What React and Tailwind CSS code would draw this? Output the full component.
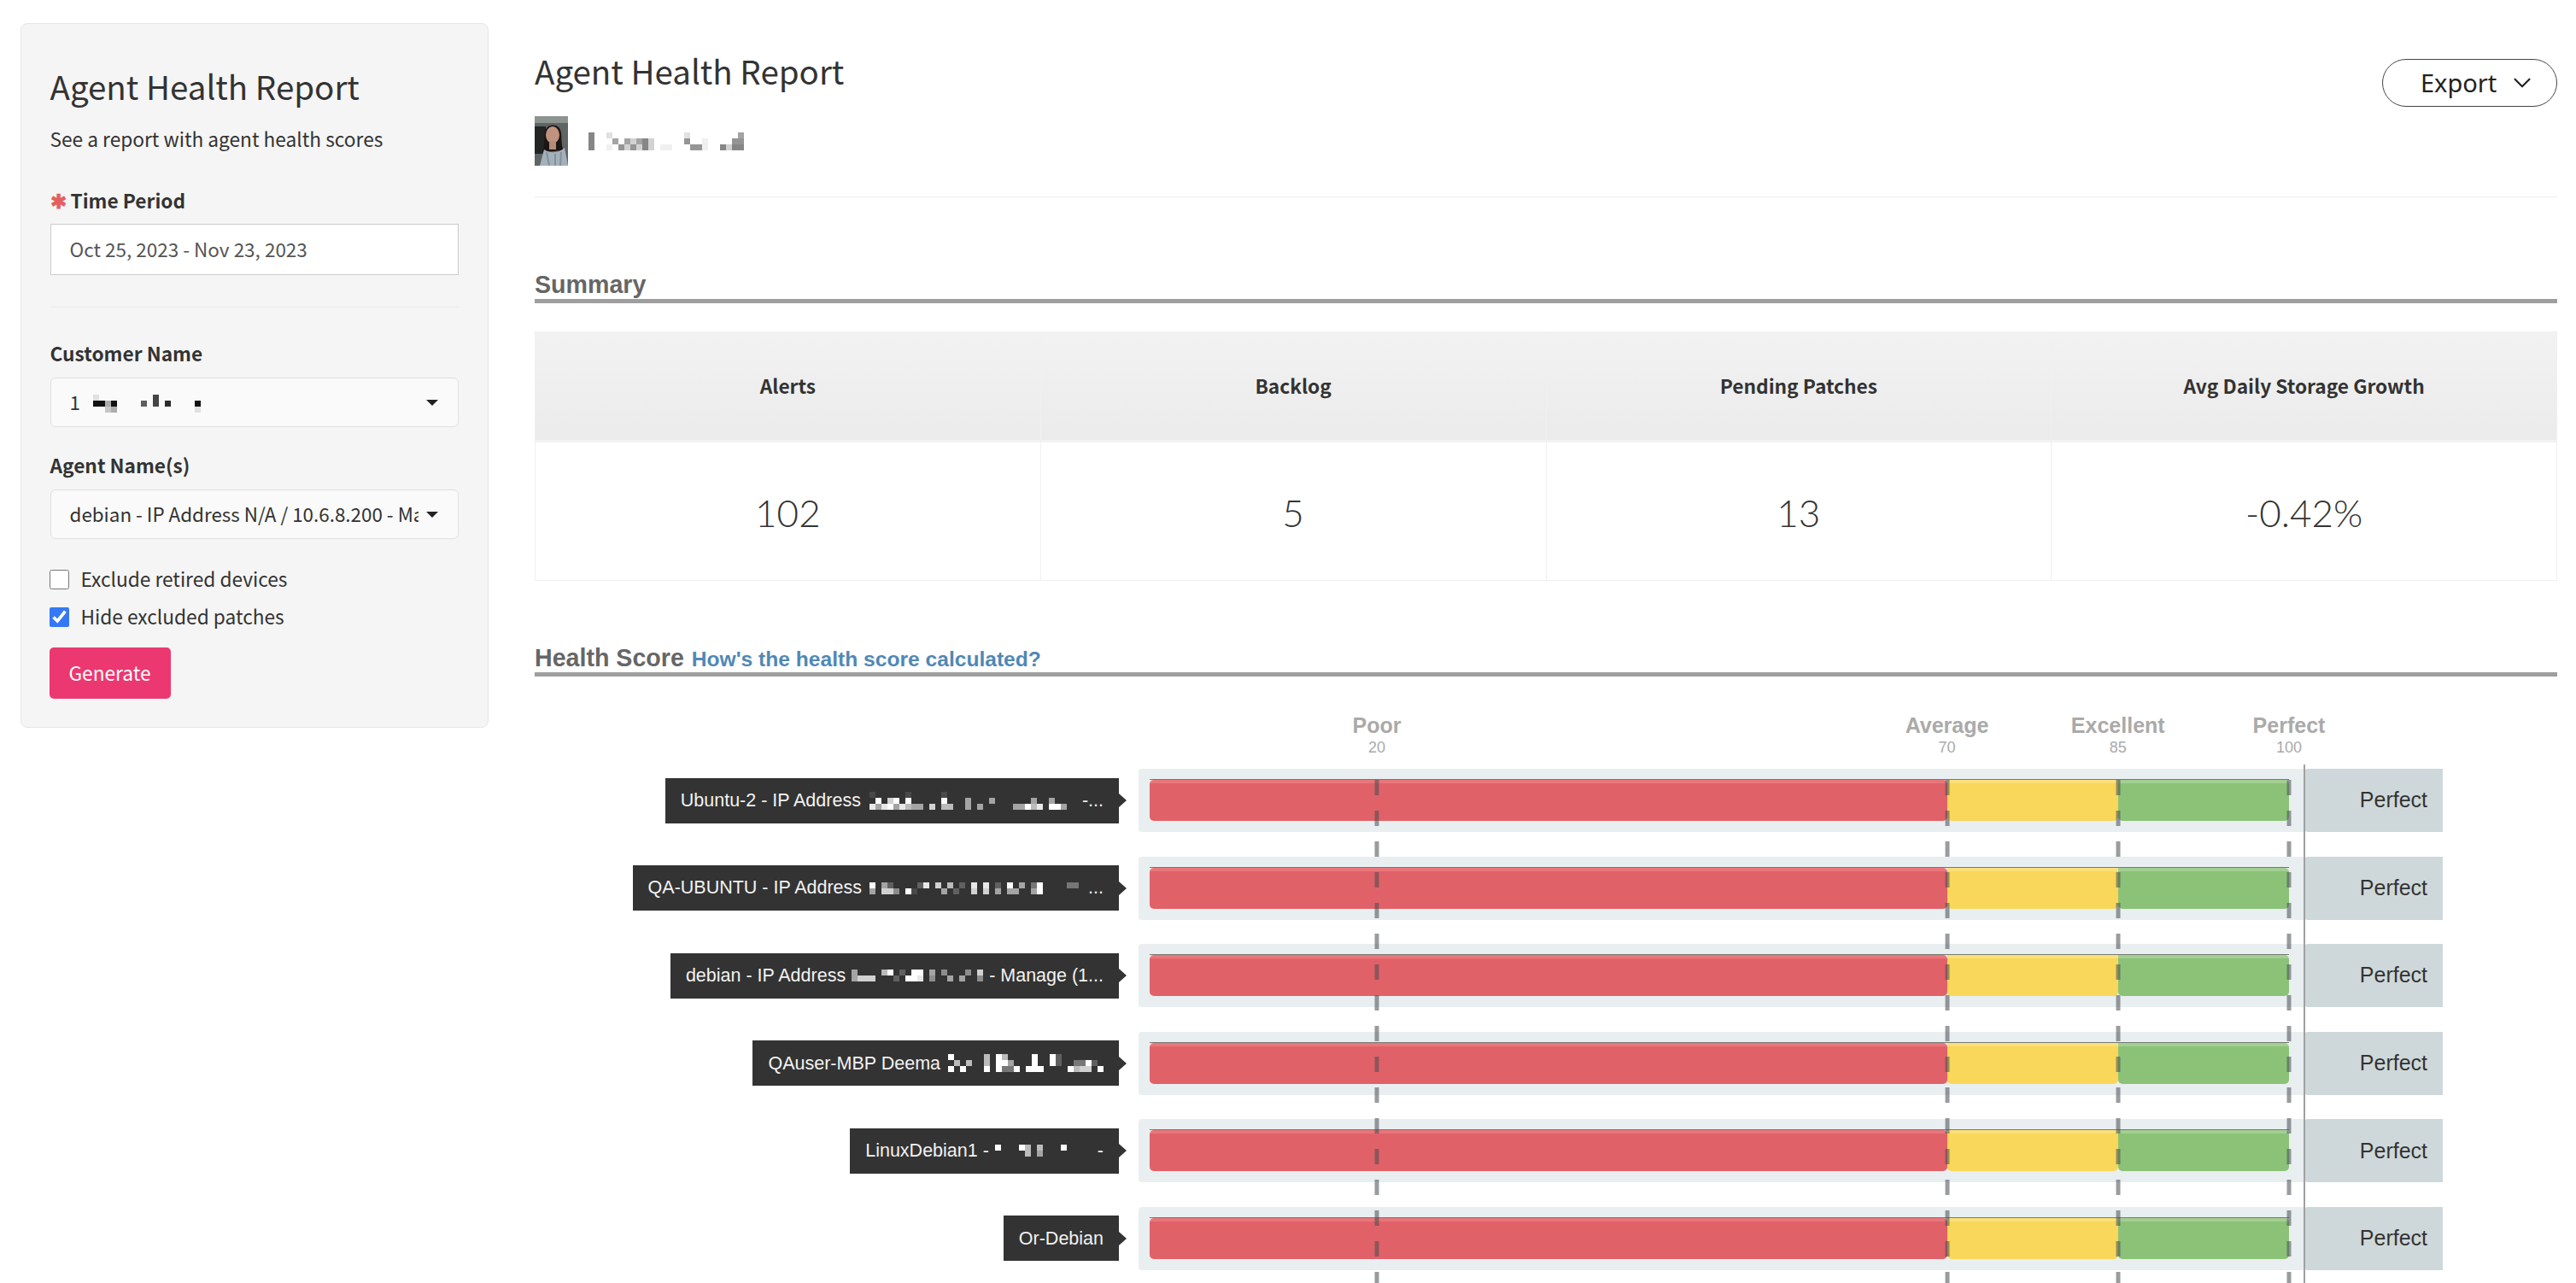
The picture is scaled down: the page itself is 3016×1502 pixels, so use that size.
import { ChevronDown } from 'lucide-react';

const SOURCE = "font-['Noto_Sans_CJK_SC',sans-serif]";

// bar scale of the health chart, offset from the chart's left edge
const toX = (v) => 1653.5 + (v - 70) * 13.35;

const ticks = [
  { name: 'Poor', value: 20 },
  { name: 'Average', value: 70 },
  { name: 'Excellent', value: 85 },
  { name: 'Perfect', value: 100 },
];

const summary = [
  { title: 'Alerts', value: '102' },
  { title: 'Backlog', value: '5' },
  { title: 'Pending Patches', value: '13' },
  { title: 'Avg Daily Storage Growth', value: '-0.42%' },
];

const agents = [
  {
    before: 'Ubuntu-2 - IP Address',
    after: '-...',
    gapBefore: 'ml-[10px]',
    gapAfter: 'ml-[11px]',
    mosaic: [
      '1.....1.....1.....................',
      '.9.79.9.....9...5...5......5..5...',
      '858958655.7.66..5.5.....55968.995.',
    ],
  },
  {
    before: 'QA-UBUNTU - IP Address',
    after: '...',
    gapBefore: 'ml-[9px]',
    gapAfter: 'ml-[4px]',
    mosaic: [
      '9.52....28.7.6.2.8.8.2.9.5.39....33.',
      '5.774.91....5.2..7.7.5.55..59.......',
    ],
  },
  {
    before: 'debian - IP Address',
    after: '- Manage (1...',
    gapBefore: 'ml-[7px]',
    gapAfter: 'ml-[7px]',
    mosaic: ['5....69.2.99.5.4...4.7', '5777...2.998.4..5.5..4'],
  },
  {
    before: 'QAuser-MBP Deema',
    after: '',
    gapBefore: 'ml-[9px]',
    gapAfter: '',
    mosaic: ['9.....6.96....9..92.......', '.6.6..6.995...9..92..3392.', '9.9...9.9339.999....9677.9'],
  },
  {
    before: 'LinuxDebian1 -',
    after: '-',
    gapBefore: 'ml-[7px]',
    gapAfter: 'ml-[36px]',
    mosaic: ['9...96.6...9', '.....6.5....'],
  },
  { before: 'Or-Debian', after: '', mosaic: null },
];

// pixelated patch standing in for blurred-out names
const Mosaic = ({ rows, color = '#fff', cell = 7 }) => {
  const cols = Math.max(...rows.map((r) => r.length));
  return (
    <svg width={cols * cell} height={rows.length * cell} className="shrink-0">
      {rows.map((row, y) =>
        row.split('').map((c, x) =>
          c === '.' ? null : (
            <rect
              key={`${x}-${y}`}
              x={x * cell}
              y={y * cell}
              width={cell}
              height={cell}
              fill={color}
              opacity={Number(c) / 9}
            />
          )
        )
      )}
    </svg>
  );
};

const Caret = () => (
  <svg width="14" height="7" viewBox="0 0 14 7" className="shrink-0">
    <polygon points="0,0 14,0 7,7" fill="#222" />
  </svg>
);

const Avatar = () => (
  <svg width="39" height="58" viewBox="0 0 39 58" className="shrink-0">
    <rect width="39" height="58" fill="#5f6465" />
    <rect width="39" height="8" fill="#8d9490" />
    <rect x="0" y="12" width="13" height="32" fill="#232424" />
    <path d="M12 20 C12 8 30 7 31 20 C32 30 31 35 34 40 L9 42 C12 36 11 28 12 20Z" fill="#1b1513" />
    <ellipse cx="21" cy="22" rx="8" ry="10" fill="#c09380" />
    <rect x="17" y="29" width="8" height="10" fill="#b58a78" />
    <path d="M6 58 L11 39 C16 43 28 44 35 37 L39 58Z" fill="#a4b0ba" />
    <path d="M14 42 L17 58 M24 44 L24 58 M31 42 L30 58" stroke="#84919c" strokeWidth="2" />
  </svg>
);

const Field = ({ label, children, className = '' }) => (
  <div className={className}>
    <label className="block h-[32px] text-[22.7px] leading-[32px] font-bold text-[#333]">{label}</label>
    {children}
  </div>
);

const SelectBox = ({ children }) => (
  <div className="mt-[12px] flex h-[58px] items-center rounded-[6px] border border-[#e0e0e0] bg-[#fafafa] pl-[22px] pr-[23px]">
    <div className="flex min-w-0 flex-1 items-center overflow-hidden whitespace-nowrap text-[22.4px] text-[#333]">
      {children}
    </div>
    <div className="ml-[9px]">
      <Caret />
    </div>
  </div>
);

const Sidebar = () => (
  <aside
    className={`${SOURCE} mt-[27px] h-[825px] w-[548px] shrink-0 rounded-[8px] border border-[#e6e6e6] bg-[#f5f5f5] px-[34px] pt-[44px]`}
  >
    <h1 className="text-[38.5px] leading-[56px] font-normal text-[#333]">Agent Health Report</h1>
    <p className="mt-[18px] text-[22.7px] leading-[34px] text-[#333]">See a report with agent health scores</p>

    <div className="mt-[39px] flex h-[32px] items-center text-[22.7px] font-bold text-[#333]">
      <span className="mr-[7px] w-[17px] text-[#e4605f]">✱</span>
      Time Period
    </div>
    <div className="mt-[11px] flex h-[60px] items-center border border-[#ccc] bg-white pl-[22px] text-[22.5px] text-[#555]">
      Oct 25, 2023 - Nov 23, 2023
    </div>
    <div className="mt-[37px] h-px bg-[#ebebeb]" />

    <Field label="Customer Name" className="mt-[38px]">
      <SelectBox>
        1
        <span className="mt-[4px] ml-[15px] inline-flex">
          <Mosaic color="#111" rows={['1.........7.......', '9939....6.7.8....9', '..23.............1']} />
        </span>
      </SelectBox>
    </Field>
    <Field label="Agent Name(s)" className="mt-[29px]">
      <SelectBox>debian - IP Address N/A / 10.6.8.200 - Manage (10.6.8.200)</SelectBox>
    </Field>

    <div className="mt-[36px] flex h-[23px] items-center text-[22.7px] text-[#333]">
      <input type="checkbox" className="m-0 ml-[-1px] h-[23px] w-[23px]" />
      <span className="ml-[14px]">Exclude retired devices</span>
    </div>
    <div className="mt-[21px] flex h-[23px] items-center text-[22.7px] text-[#333]">
      <input type="checkbox" defaultChecked className="m-0 ml-[-1px] h-[23px] w-[23px] accent-[#3478f6]" />
      <span className="ml-[14px]">Hide excluded patches</span>
    </div>
    <button className="mt-[24px] ml-[-1px] h-[60px] w-[142px] rounded-[5px] bg-[#ec3870] text-[22.7px] text-[#fff]">Generate</button>
  </aside>
);

const SectionTitle = ({ children }) => (
  <div className="flex items-baseline border-b-[5px] border-[#9e9e9e] font-['Liberation_Sans',Arial,sans-serif] font-bold leading-[34px] text-[#666]">
    {children}
  </div>
);

const SummaryTable = () => (
  <div className={`${SOURCE} mt-[33px] grid grid-cols-4 border-b border-r border-[#f0f0f0]`}>
    {summary.map((item) => (
      <div key={item.title} className="border-l border-[#f0f0f0]">
        <div className="flex h-[127px] items-center justify-center pt-[2px] bg-[linear-gradient(to_bottom,#f2f2f2,#ebebeb)] text-[22.7px] font-bold text-[#333]">
          {item.title}
        </div>
        <div className="h-[3px] bg-[#f3f3f3]" />
        <div className="flex h-[161px] items-center justify-center pt-[3px] font-['Lato',sans-serif] text-[44px] font-light text-[#333]">
          {item.value}
        </div>
      </div>
    ))}
  </div>
);

const AgentRow = ({ agent }) => (
  <div className="mb-[28.6px] flex h-[74px] items-center">
    <div className="flex w-[684px] justify-end">
      <div className="relative flex h-[53px] items-center bg-[#333] px-[18px] text-[21.5px] whitespace-nowrap text-[#f2f2f2]">
        <span>{agent.before}</span>
        {agent.mosaic && (
          <span className={`${agent.gapBefore} inline-flex`}>
            <Mosaic rows={agent.mosaic} />
          </span>
        )}
        {agent.after && <span className={agent.gapAfter}>{agent.after}</span>}
        <div className="absolute top-1/2 left-full h-0 w-0 -translate-y-1/2 border-y-[8px] border-l-[9px] border-y-transparent border-l-[#333]" />
      </div>
    </div>
    <div className="ml-[23px] h-full w-[1365px] rounded-l-[4px] bg-[#e9eef0] pt-[12px] pl-[13px]">
      <div className="flex h-[49px] w-[1334px] border-t border-[#757a70]">
        <div className="w-[933.5px] rounded-[5px] bg-[linear-gradient(to_bottom,#e9767b_0,#e9767b_4px,#e06268_4px)]" />
        <div className="w-[200.5px] rounded-b-[5px] bg-[linear-gradient(to_bottom,#fbe07a_0,#fbe07a_4px,#f8d75a_4px)]" />
        <div className="w-[200px] rounded-b-[5px] rounded-tr-[5px] bg-[linear-gradient(to_bottom,#a3cf92_0,#a3cf92_4px,#8bc277_4px)]" />
      </div>
    </div>
    <div className="flex h-full w-[162px] items-center justify-end rounded-l-[4px] bg-[#ced8da] pr-[18px] text-[25px] text-[#333]">
      Perfect
    </div>
  </div>
);

const HealthChart = () => (
  <div className="relative h-[711px] pt-[108px] font-['Liberation_Sans',Arial,sans-serif]">
    {ticks.map((tick) => (
      <div key={tick.name}>
        <div
          className="absolute top-[42px] flex -translate-x-1/2 flex-col items-center text-[#aaa]"
          style={{ left: toX(tick.value) }}
        >
          <span className="text-[25px] leading-[30px] font-bold">{tick.name}</span>
          <span className="text-[18px] leading-[22px]">{tick.value}</span>
        </div>
        <div
          className="absolute top-[121px] bottom-0 z-10 w-[5px] -translate-x-1/2 bg-[repeating-linear-gradient(to_bottom,rgba(70,75,80,0.55)_0,rgba(70,75,80,0.55)_18px,transparent_18px,transparent_36px)]"
          style={{ left: toX(tick.value) }}
        />
      </div>
    ))}
    <div className="absolute top-[103px] bottom-0 left-[2071px] z-10 w-[2px] bg-[#a0a0a0]" />
    {agents.map((agent) => (
      <AgentRow key={agent.before} agent={agent} />
    ))}
  </div>
);

export default function App() {
  return (
    <div className="flex h-screen w-full overflow-hidden bg-white pl-[23.5px]">
      <Sidebar />
      <main className="ml-[54.5px] w-[2368px] shrink-0">
        <header className={`${SOURCE} flex h-[231px] justify-between border-b border-[#eee]`}>
          <div>
            <h2 className="mt-[54px] text-[38.5px] leading-[56px] font-normal text-[#333]">Agent Health Report</h2>
            <div className="mt-[26px] flex items-center">
              <Avatar />
              <span className="ml-[24px] inline-flex">
                <Mosaic
                  color="#777"
                  rows={['8..2............2........6', '8...6.63683.....7..1....77', '8..1.737383.11...771..8388']}
                />
              </span>
            </div>
          </div>
          <button className="mt-[69px] flex h-[56px] w-[205px] items-center rounded-full border border-[#444] pl-[44px] font-['Noto_Sans',sans-serif] text-[29px] text-[#222]">
            Export
            <ChevronDown className="ml-[13px]" size={34} strokeWidth={1.5} />
          </button>
        </header>

        <div className="mt-[85px] text-[28.6px]">
          <SectionTitle>Summary</SectionTitle>
        </div>
        <SummaryTable />

        <div className="mt-[73px] text-[28.6px]">
          <SectionTitle>
            Health Score
            <a className="ml-[9px] text-[24.6px] leading-[30px] text-[#5088b5]">How's the health score calculated?</a>
          </SectionTitle>
        </div>
        <HealthChart />
      </main>
    </div>
  );
}
